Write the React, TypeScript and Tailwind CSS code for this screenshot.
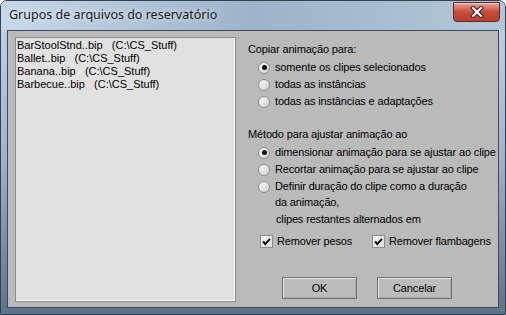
import React from "react";

const font = { fontFamily: '"Liberation Sans", Arial, sans-serif' };

function Radio({ checked }: { checked?: boolean }) {
  return (
    <span className="relative w-[12px] h-[12px] shrink-0 rounded-full border border-[#8a8c8e] bg-gradient-to-br from-[#fafafa] via-[#e6e6e6] to-[#cfcfcf] flex items-center justify-center">
      {checked && <span className="w-[5px] h-[5px] rounded-full bg-[#111]" />}
    </span>
  );
}

function Check() {
  return (
    <span className="w-[13px] h-[13px] shrink-0 border border-[#8a8c8e] bg-gradient-to-br from-[#f4f4f4] to-[#dcdcdc] flex items-center justify-center">
      <svg width="9" height="9" viewBox="0 0 9 9">
        <path d="M1 4.5 L3.3 7 L8 1.8" fill="none" stroke="#111" strokeWidth="2" />
      </svg>
    </span>
  );
}

export default function App() {
  const items = [
    ["BarStoolStnd..bip", "(C:\\CS_Stuff)"],
    ["Ballet..bip", "(C:\\CS_Stuff)"],
    ["Banana..bip", "(C:\\CS_Stuff)"],
    ["Barbecue..bip", "(C:\\CS_Stuff)"],
  ];
  return (
    <div
      className="w-[506px] h-[315px] overflow-hidden rounded-t-[7px] border border-[#34414f] bg-gradient-to-b from-[#c3d5e7] via-[#9fb4ca] to-[#5d728b] flex flex-col"
      style={font}
    >
      <div className="h-[29px] shrink-0 flex items-start justify-between bg-gradient-to-r from-[#c7d8ea] via-[#9db3c9] to-[#b3c6d9]">
        <span
          className="mt-[6px] ml-[8px] text-[12.5px] leading-[16px] text-[#1a1a1a]"
          style={{ fontFamily: '"Noto Sans", "Liberation Sans", sans-serif', textShadow: "0 0 6px rgba(255,255,255,0.9)" }}
        >
          Grupos de arquivos do reservatório
        </span>
        <div className="mt-[1px] mr-[5px] w-[47px] h-[20px] rounded-b-[4px] border border-[#5b2a27] bg-gradient-to-b from-[#e8a497] via-[#c94a37] to-[#b9412f] flex items-center justify-center shadow-[inset_0_1px_0_rgba(255,255,255,0.5)]">
          <svg width="14" height="12" viewBox="0 0 14 12">
            <path d="M3 2 L11 10 M11 2 L3 10" stroke="#3a1a18" strokeWidth="4.2" strokeLinecap="square" />
            <path d="M3 2 L11 10 M11 2 L3 10" stroke="#ffffff" strokeWidth="2.2" strokeLinecap="square" />
          </svg>
        </div>
      </div>
      <div className="mx-[6px] h-[278px] shrink-0 border border-[#3c4a5a] bg-[#bababa] flex text-[11px] text-black whitespace-nowrap tracking-[-0.15px]">
        <div className="ml-[7px] mt-[6px] w-[221px] h-[265px] shrink-0 border border-[#8c8c8c] shadow-[inset_-1px_-1px_0_#ffffff] bg-[#e1e1e1] pt-[1px] pl-[1px] tracking-normal">
          {items.map(([a, b]) => (
            <div key={a} className="h-[13px] leading-[13px] whitespace-pre">
              {a}
              {"   "}
              {b}
            </div>
          ))}
        </div>
        <div className="ml-[12px] flex flex-col">
          <div className="mt-[11px] h-[14px] leading-[14px]">Copiar animação para:</div>
          <div className="mt-[3px] h-[17px] flex items-center ml-[10px] gap-[5px]">
            <Radio checked />
            <span>somente os clipes selecionados</span>
          </div>
          <div className="h-[17px] flex items-center ml-[10px] gap-[5px]">
            <Radio />
            <span>todas as instâncias</span>
          </div>
          <div className="h-[17px] flex items-center ml-[10px] gap-[5px]">
            <Radio />
            <span>todas as instâncias e adaptações</span>
          </div>
          <div className="mt-[17px] h-[14px] leading-[14px]">Método para ajustar animação ao</div>
          <div className="mt-[3px] h-[17px] flex items-center ml-[10px] gap-[5px]">
            <Radio checked />
            <span>dimensionar animação para se ajustar ao clipe</span>
          </div>
          <div className="h-[17px] flex items-center ml-[10px] gap-[5px]">
            <Radio />
            <span>Recortar animação para se ajustar ao clipe</span>
          </div>
          <div className="flex items-start ml-[10px] gap-[5px]">
            <div className="h-[17px] flex items-center">
              <Radio />
            </div>
            <div className="flex flex-col">
              <span className="h-[17px] leading-[17px]">Definir duração do clipe como a duração</span>
              <span className="h-[16px] leading-[14px]">da animação,</span>
              <span className="h-[16px] leading-[16px] pl-[1px]">clipes restantes alternados em</span>
            </div>
          </div>
          <div className="mt-[6px] h-[17px] flex items-center ml-[12px]">
            <div className="w-[112px] flex items-center gap-[4px]">
              <Check />
              <span>Remover pesos</span>
            </div>
            <div className="flex items-center gap-[4px]">
              <Check />
              <span>Remover flambagens</span>
            </div>
          </div>
          <div className="mt-[27px] ml-[34px] flex gap-[20px]">
            <div className="w-[75px] h-[22px] border border-[#707070] bg-[#bcbcbc] shadow-[inset_1px_1px_0_#e6e6e6,inset_-1px_-1px_0_#a8a8a8] flex items-center justify-center">
              OK
            </div>
            <div className="w-[75px] h-[22px] border border-[#707070] bg-[#bcbcbc] shadow-[inset_1px_1px_0_#e6e6e6,inset_-1px_-1px_0_#a8a8a8] flex items-center justify-center">
              Cancelar
            </div>
          </div>
        </div>
      </div>
    </div>
  );
}
